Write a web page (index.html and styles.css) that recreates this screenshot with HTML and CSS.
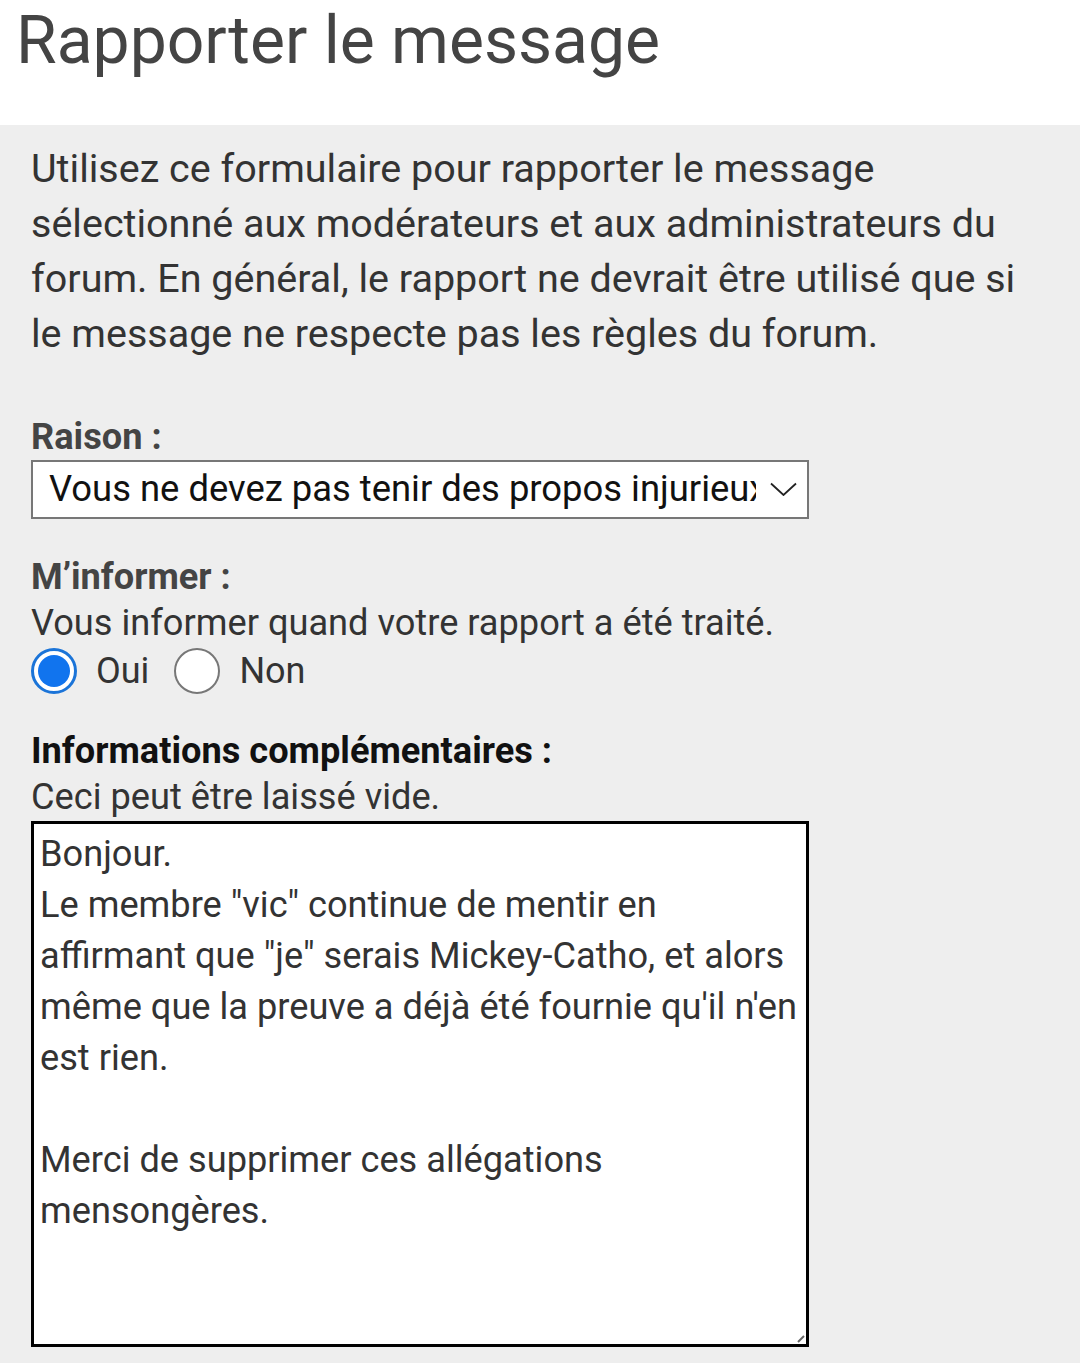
FILE: index.html
```html
<!DOCTYPE html>
<html lang="fr">
<head>
<meta charset="utf-8">
<link rel="stylesheet" href="styles.css">
</head>
<body>
<header class="head">
  <h1 class="title">Rapporter le message</h1>
</header>
<main class="panel">
  <p class="intro">Utilisez ce formulaire pour rapporter le message<br>sélectionné aux modérateurs et aux administrateurs du<br>forum. En général, le rapport ne devrait être utilisé que si<br>le message ne respecte pas les règles du forum.</p>

  <div class="field f1">
    <div class="label">Raison :</div>
    <div class="select">
      <span class="select-text">Vous ne devez pas tenir des propos injurieux</span>
      <svg class="chev" width="27" height="14" viewBox="0 0 27 14"><path d="M1 1.5 L13.5 13 L26 1.5" fill="none" stroke="#222" stroke-width="1.8"/></svg>
    </div>
  </div>

  <div class="field f2">
    <div class="label">M’informer :</div>
    <div class="hint">Vous informer quand votre rapport a été traité.</div>
    <div class="radios">
      <span class="radio on"><span class="dot"></span></span><span class="rlabel">Oui</span>
      <span class="radio"></span><span class="rlabel">Non</span>
    </div>
  </div>

  <div class="field f3">
    <div class="label dark">Informations complémentaires :</div>
    <div class="hint">Ceci peut être laissé vide.</div>
    <div class="textarea">Bonjour.<br>Le membre "vic" continue de mentir en<br>affirmant que "je" serais Mickey-Catho, et alors<br>même que la preuve a déjà été fournie qu'il n'en<br>est rien.<br><br>Merci de supprimer ces allégations<br>mensongères.<svg class="grip" width="8" height="8" viewBox="0 0 8 8"><path d="M7 1 L1 7" stroke="#666" stroke-width="2"/></svg></div>
  </div>
</main>
</body>
</html>
```
FILE: styles.css
```css
html, body {
  margin: 0;
  padding: 0;
}
body {
  font-family: Roboto, "Noto Sans", sans-serif;
  background: #eeeeee;
  width: 1080px;
  height: 1363px;
  overflow: hidden;
}
.head {
  background: #ffffff;
  height: 125px;
  padding-left: 16px;
  box-sizing: border-box;
}
.title {
  margin: 0;
  font-weight: 400;
  font-size: 66px;
  line-height: 82px;
  color: #444444;
}
.panel {
  padding: 0 31px;
}
.intro {
  margin: 0;
  padding-top: 16px;
  font-size: 39.5px;
  line-height: 55px;
  color: #333333;
  white-space: nowrap;
}
.f1 {
  margin-top: 53px;
}
.label {
  font-weight: 700;
  font-size: 36.2px;
  line-height: 46px;
  color: #444444;
}
.label.dark {
  color: #111111;
}
.select {
  width: 778px;
  height: 59px;
  box-sizing: border-box;
  border: 2px solid #777777;
  background: #ffffff;
  display: flex;
  align-items: center;
  padding: 0 10px 2px 16px;
  gap: 14px;
}
.select-text {
  flex: 1;
  overflow: hidden;
  white-space: nowrap;
  font-size: 36.4px;
  color: #111111;
}
.chev {
  flex: none;
}
.f2 {
  margin-top: 35px;
}
.hint {
  font-size: 36.2px;
  line-height: 46px;
  color: #333333;
}
.radios {
  display: flex;
  align-items: center;
  height: 50px;
}
.radio {
  width: 46px;
  height: 46px;
  box-sizing: border-box;
  border-radius: 50%;
  border: 2px solid #777777;
  background: #ffffff;
  display: flex;
  align-items: center;
  justify-content: center;
}
.radio.on {
  border: 3px solid #1b74d8;
}
.dot {
  width: 32px;
  height: 32px;
  border-radius: 50%;
  background: #1174ee;
}
.rlabel {
  font-size: 36px;
  color: #333333;
  margin: 0 25px 0 19px;
}
.f3 {
  margin-top: 32px;
}
.textarea {
  position: relative;
  margin-top: 1px;
  width: 778px;
  height: 526px;
  box-sizing: border-box;
  border: 3px solid #000000;
  background: #ffffff;
  padding: 4px 0 0 6px;
  font-size: 36.2px;
  line-height: 51px;
  color: #333333;
  white-space: nowrap;
}
.grip {
  position: absolute;
  right: 1px;
  bottom: 1px;
}
```
